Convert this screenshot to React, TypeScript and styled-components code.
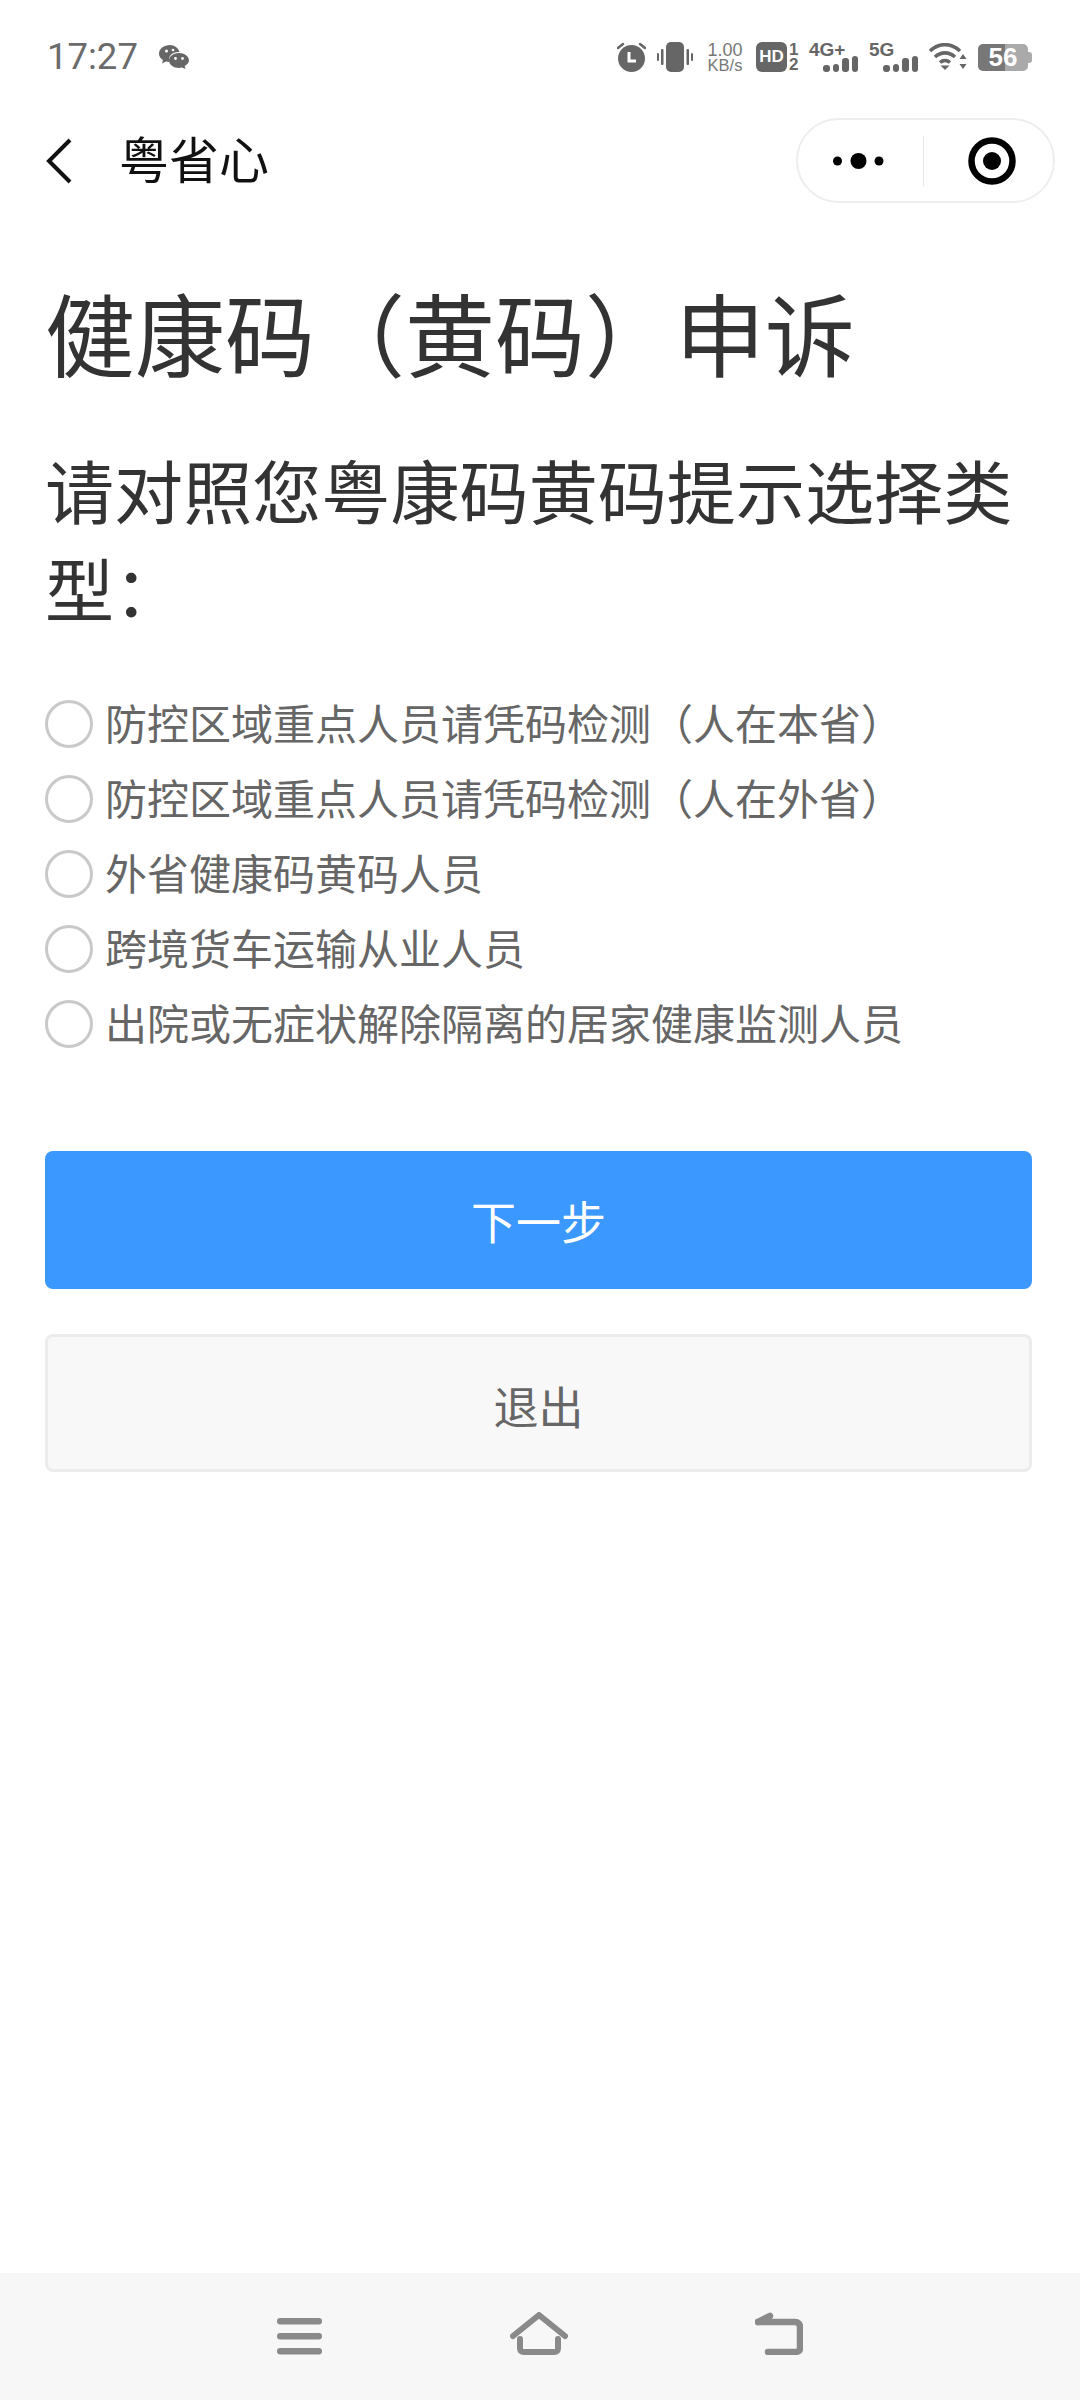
import React from "react";
import styled, { createGlobalStyle } from "styled-components";

const Global = createGlobalStyle`
  html, body { margin: 0; padding: 0; background: #fff; }
  * { box-sizing: border-box; }
  #root { font-family: "Noto Sans CJK SC", "Noto Sans", sans-serif; }
`;

const Page = styled.div`
  width: 1080px;
  height: 2400px;
  display: flex;
  flex-direction: column;
  background: #fff;
  overflow: hidden;
`;

const StatusBar = styled.div`
  height: 58px;
  margin-top: 28px;
  padding: 0 48px 0 47px;
  display: flex;
  align-items: center;
  justify-content: space-between;
  color: #666;
`;

const StatusLeft = styled.div`
  display: flex;
  align-items: center;
  gap: 21px;
`;

const Clock = styled.span`
  font-family: Roboto, sans-serif;
  font-size: 36.5px;
  line-height: 58px;
  color: #6b6b6b;
`;

const StatusRight = styled.div`
  display: flex;
  align-items: center;
  gap: 11px;
`;

const Speed = styled.div`
  width: 36px;
  margin: 0 2px 0 3px;
  display: flex;
  flex-direction: column;
  align-items: center;
  font-family: "Liberation Sans", sans-serif;
  font-size: 16.500px;
  line-height: 15px;
  color: #777;
  & > span:first-child { font-size: 18px; line-height: 16px; }
`;

const HdGroup = styled.div`
  width: 42px;
  display: flex;
  align-items: center;
  gap: 2px;
`;

const HdBox = styled.span`
  width: 31px;
  height: 30px;
  flex: none;
  border-radius: 6px;
  background: #666;
  color: #fff;
  font-family: "Liberation Sans", sans-serif;
  font-size: 17px;
  font-weight: 700;
  line-height: 30px;
  text-align: center;
`;

const HdDigits = styled.div`
  display: flex;
  flex-direction: column;
  font-family: "Liberation Sans", sans-serif;
  font-size: 17px;
  font-weight: 700;
  line-height: 15px;
  color: #666;
`;

const Signal = styled.div`
  width: 49px;
  height: 30px;
  display: flex;
  flex-direction: column;
  font-family: "Liberation Sans", sans-serif;
  font-size: 19px;
  font-weight: 700;
  line-height: 15px;
  color: #666;
`;

const Bars = styled.div`
  height: 15px;
  display: flex;
  align-items: flex-end;
  justify-content: flex-end;
  gap: 3px;
`;

const Bar = styled.i<{ $h: number }>`
  width: 6.500px;
  height: ${(p) => p.$h}px;
  border-radius: 3px;
  background: #666;
`;

const Battery = styled.div`
  position: relative;
  width: 50px;
  height: 27px;
  margin-right: 4px;
  border-radius: 5px;
  background: linear-gradient(90deg, #777 0 54%, #aaa 54% 100%);
  color: #fff;
  font-family: "Liberation Sans", sans-serif;
  font-size: 26px;
  font-weight: 700;
  line-height: 27px;
  text-align: center;
  &::after {
    content: "";
    position: absolute;
    right: -4px;
    top: 8px;
    width: 4px;
    height: 11px;
    border-radius: 0 3px 3px 0;
    background: #aaa;
  }
`;

const NavBar = styled.div`
  height: 85px;
  margin-top: 32px;
  padding: 0 25px 0 46px;
  display: flex;
  align-items: center;
`;

const NavTitle = styled.div`
  margin: 0 0 6px 47px;
  flex: 1;
  font-size: 50px;
  line-height: 79px;
  color: #111;
`;

const Capsule = styled.div`
  width: 259px;
  height: 85px;
  border: 2px solid #eee;
  border-radius: 43px;
  display: flex;
  align-items: center;
  background: #fff;
`;

const CapsuleCell = styled.div<{ $nudge: number }>`
  flex: 1;
  height: 50px;
  display: flex;
  align-items: center;
  justify-content: center;
  padding-left: ${(p) => Math.max(p.$nudge, 0)}px;
  padding-right: ${(p) => Math.max(-p.$nudge, 0)}px;
  & + & { border-left: 1px solid #e8e8e8; }
`;

const Main = styled.main`
  padding: 0 48px 0 45px;
  display: flex;
  flex-direction: column;
`;

const Title = styled.h1`
  margin: 78px 0 0;
  font-size: 90px;
  font-weight: 400;
  line-height: 100px;
  color: #333;
`;

const Subtitle = styled.h2`
  margin: 59px 0 0;
  font-size: 69.100px;
  font-weight: 400;
  line-height: 98px;
  color: #333;
`;

const Options = styled.div`
  margin-top: 50px;
  display: flex;
  flex-direction: column;
`;

const OptionRow = styled.label`
  height: 75px;
  display: flex;
  align-items: center;
  gap: 12px;
  font-size: 42px;
  color: #666;
  white-space: nowrap;
`;

const OptionText = styled.span`
  margin-bottom: 4px;
`;

const Radio = styled.span`
  width: 48px;
  height: 48px;
  flex: none;
  border: 3px solid #c9c9c9;
  border-radius: 50%;
  background: #fff;
`;

const Button = styled.button<{ $primary?: boolean }>`
  width: 100%;
  height: 138px;
  display: block;
  padding: ${(p) => (p.$primary ? "0" : "5px 0 0")};
  border-radius: 8px;
  border: ${(p) => (p.$primary ? "none" : "3px solid #ececec")};
  background: ${(p) => (p.$primary ? "#3b98ff" : "#f8f8f8")};
  color: ${(p) => (p.$primary ? "#fff" : "#666")};
  font-family: inherit;
  font-size: 45px;
  line-height: 1;
  margin-top: ${(p) => (p.$primary ? "90px" : "45px")};
`;

const BottomNav = styled.nav`
  margin-top: auto;
  height: 127px;
  padding-bottom: 45px;
  background: #f7f7f7;
  display: flex;
  align-items: flex-end;
  justify-content: center;
  gap: 187.500px;
`;

const options = [
  "防控区域重点人员请凭码检测（人在本省）",
  "防控区域重点人员请凭码检测（人在外省）",
  "外省健康码黄码人员",
  "跨境货车运输从业人员",
  "出院或无症状解除隔离的居家健康监测人员",
];

const WeChatIcon = () => (
  <svg width="30" height="24" viewBox="0 0 30 24" fill="#666">
    <path d="M11 0C5 0 0 3.700 0 8.500c0 2.700 1.500 5 4 6.600L3 18.500l4-2c1 .3 2.200.5 3.400.5-.3-.8-.4-1.600-.4-2.500C10 10 14 7 19.500 7h1C19.300 3 15.500 0 11 0z" />
    <path d="M20 8c-5.500 0-10 3.200-10 7.500S14.500 23 20 23c1 0 2-.1 3-.4l3.500 1.400-.8-3C28.300 19.600 30 17.700 30 15.500 30 11.200 25.500 8 20 8z" />
    <circle cx="7.500" cy="6" r="1.500" fill="#fff" />
    <circle cx="14" cy="5" r="1.300" fill="#fff" />
    <circle cx="16.500" cy="13.500" r="1.400" fill="#fff" />
    <circle cx="23.500" cy="13.500" r="1.400" fill="#fff" />
  </svg>
);

const AlarmIcon = () => (
  <svg width="29" height="30" viewBox="0 0 29 30">
    <circle cx="14.500" cy="16.500" r="13.500" fill="#666" />
    <path d="M1 6l5-4M28 6l-5-4" stroke="#666" strokeWidth="2.500" strokeLinecap="round" />
    <path d="M12 10v9h7" fill="none" stroke="#fff" strokeWidth="3" />
  </svg>
);

const VibrateIcon = () => (
  <svg width="36" height="30" viewBox="0 0 36 30" fill="#666">
    <rect x="9" y="0" width="18" height="30" rx="5" />
    <rect x="0" y="11" width="2" height="8" rx="1" />
    <rect x="4" y="7" width="2.500" height="16" rx="1" />
    <rect x="29.500" y="7" width="2.500" height="16" rx="1" />
    <rect x="34" y="11" width="2" height="8" rx="1" />
  </svg>
);

const WifiIcon = () => (
  <svg width="38" height="28" viewBox="0 0 38 28">
    <g fill="none" stroke="#666" strokeWidth="3.600">
      <path d="M1 8c9-8.500 21-8.500 30 0" />
      <path d="M6 14c6-5.500 14-5.500 20 0" />
      <path d="M11 19.500c3-2.700 7-2.700 10 0" />
    </g>
    <path d="M16 27l-4.500-4.500h9z" fill="#666" />
    <path d="M34 11l3.500 5h-7zM34 26l3.500-5h-7z" fill="#666" />
  </svg>
);

const BackChevron = () => (
  <svg width="26" height="46" viewBox="0 0 26 46">
    <path d="M24 2L3 23l21 21" fill="none" stroke="#111" strokeWidth="4" />
  </svg>
);

const DotsIcon = () => (
  <svg width="52" height="18" viewBox="0 0 52 18" fill="#000">
    <circle cx="4.500" cy="9" r="4.500" />
    <circle cx="25.500" cy="9" r="8" />
    <circle cx="46" cy="9" r="4.500" />
  </svg>
);

const TargetIcon = () => (
  <svg width="48" height="48" viewBox="0 0 48 48">
    <circle cx="24" cy="24" r="20.500" fill="none" stroke="#000" strokeWidth="6.500" />
    <circle cx="24" cy="24" r="9" fill="#000" />
  </svg>
);

const MenuIcon = () => (
  <svg width="45" height="37" viewBox="0 0 45 37" fill="#8a8a8a">
    <rect x="0" y="0" width="45" height="6.500" rx="3.200" />
    <rect x="0" y="15" width="45" height="6.500" rx="3.200" />
    <rect x="0" y="30" width="45" height="6.500" rx="3.200" />
  </svg>
);

const HomeIcon = () => (
  <svg width="58" height="43" viewBox="0 0 58 43" fill="none" stroke="#8a8a8a" strokeWidth="6" strokeLinecap="round" strokeLinejoin="round">
    <path d="M3 24L29 3l26 21" />
    <path d="M10 27v9c0 3 1 4 4 4h30c3 0 4-1 4-4v-9" />
  </svg>
);

const ReturnIcon = () => (
  <svg width="48" height="43" viewBox="0 0 48 43" fill="none" stroke="#8a8a8a" strokeWidth="6.500" strokeLinecap="round" strokeLinejoin="round">
    <path d="M3 10h37c3 0 5 2 5 5v21c0 3-2 4-5 4H13" />
    <path d="M3 10l12-6" />
  </svg>
);

const SignalBars = () => (
  <Bars>
    <Bar $h={7} />
    <Bar $h={8} />
    <Bar $h={14} />
    <Bar $h={16} />
  </Bars>
);

export default function App() {
  return (
    <Page>
      <Global />
      <StatusBar>
        <StatusLeft>
          <Clock>17:27</Clock>
          <WeChatIcon />
        </StatusLeft>
        <StatusRight>
          <AlarmIcon />
          <VibrateIcon />
          <Speed>
            <span>1.00</span>
            <span>KB/s</span>
          </Speed>
          <HdGroup>
            <HdBox>HD</HdBox>
            <HdDigits>
              <span>1</span>
              <span>2</span>
            </HdDigits>
          </HdGroup>
          <Signal>
            <span>4G+</span>
            <SignalBars />
          </Signal>
          <Signal>
            <span>5G</span>
            <SignalBars />
          </Signal>
          <WifiIcon />
          <Battery>56</Battery>
        </StatusRight>
      </StatusBar>

      <NavBar>
        <BackChevron />
        <NavTitle>粤省心</NavTitle>
        <Capsule>
          <CapsuleCell $nudge={-3}>
            <DotsIcon />
          </CapsuleCell>
          <CapsuleCell $nudge={7}>
            <TargetIcon />
          </CapsuleCell>
        </Capsule>
      </NavBar>

      <Main>
        <Title>健康码（黄码）申诉</Title>
        <Subtitle>请对照您粤康码黄码提示选择类型：</Subtitle>
        <Options>
          {options.map((o, i) => (
            <OptionRow key={i}>
              <Radio />
              <OptionText>{o}</OptionText>
            </OptionRow>
          ))}
        </Options>
        <Button $primary>下一步</Button>
        <Button>退出</Button>
      </Main>

      <BottomNav>
        <MenuIcon />
        <HomeIcon />
        <ReturnIcon />
      </BottomNav>
    </Page>
  );
}
